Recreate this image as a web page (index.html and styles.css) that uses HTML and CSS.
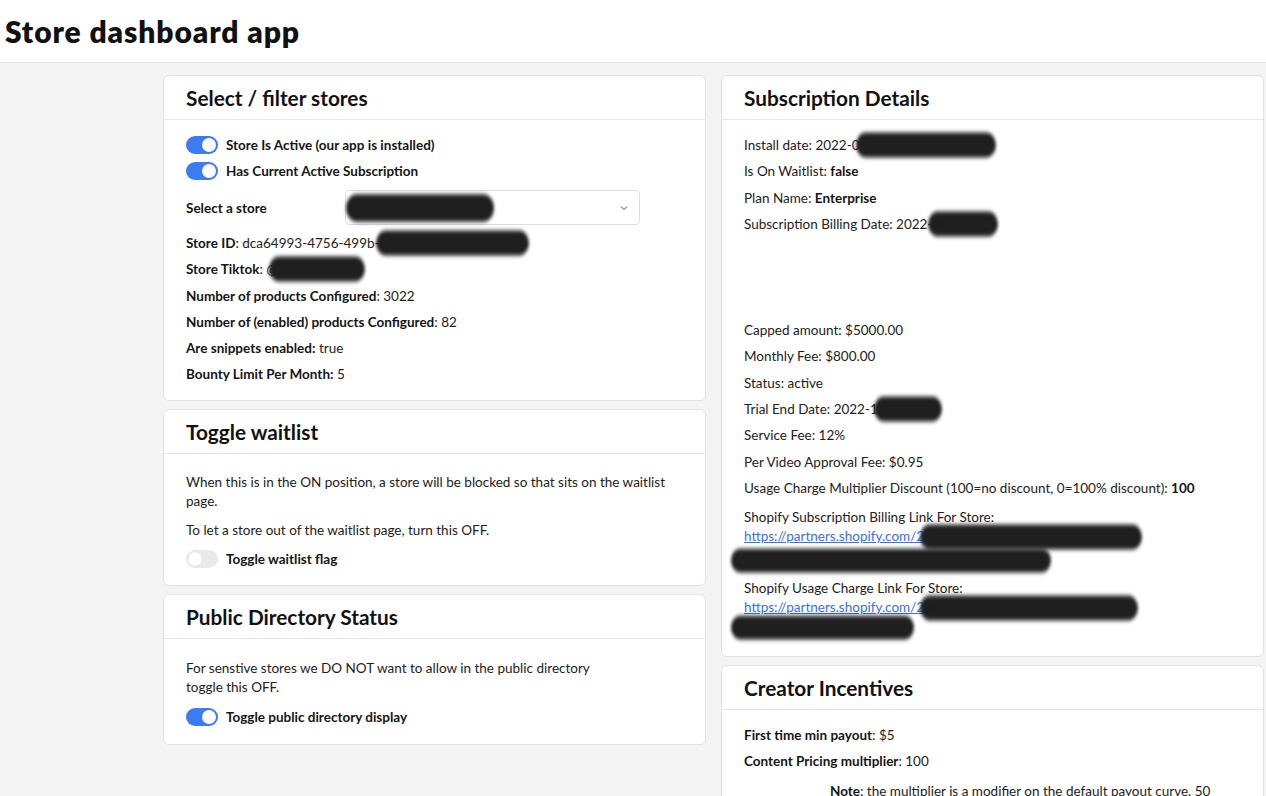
FILE: index.html
```html
<!DOCTYPE html>
<html lang="en">
<head>
<meta charset="utf-8">
<title>Store dashboard app</title>
<link rel="stylesheet" href="styles.css">
</head>
<body>
<header class="topbar"><h1>Store dashboard app</h1></header>
<main class="layout">
  <div class="column">
    <section class="card">
      <div class="card-head"><h2>Select / filter stores</h2></div>
      <div class="card-body">
        <label class="switch-row"><span class="switch on"></span><b>Store Is Active (our app is installed)</b></label>
        <label class="switch-row"><span class="switch on"></span><b>Has Current Active Subscription</b></label>
        <div class="select-row">
          <b class="select-label">Select a store</b>
          <div class="select">
            <span class="blob blob-select"></span>
            <svg class="chevron" width="10" height="6" viewBox="0 0 10 6"><path d="M2 1.5 5 4.5 8 1.5" fill="none" stroke="#9a9a9a" stroke-width="1.3"/></svg>
          </div>
        </div>
        <p class="line"><b>Store ID</b>: dca64993-4756-499b-<span class="blob blob-over" style="width:153px"></span></p>
        <p class="line"><b>Store Tiktok</b>: @<span class="blob blob-over2" style="width:96px"></span></p>
        <p class="line"><b>Number of products Configured</b>: 3022</p>
        <p class="line"><b>Number of (enabled) products Configured</b>: 82</p>
        <p class="line"><b>Are snippets enabled:</b> true</p>
        <p class="line"><b>Bounty Limit Per Month:</b> 5</p>
      </div>
    </section>
    <section class="card">
      <div class="card-head"><h2>Toggle waitlist</h2></div>
      <div class="card-body">
        <p class="para">When this is in the ON position, a store will be blocked so that sits on the waitlist page.</p>
        <p class="para">To let a store out of the waitlist page, turn this OFF.</p>
        <label class="switch-row"><span class="switch"></span><b>Toggle waitlist flag</b></label>
      </div>
    </section>
    <section class="card">
      <div class="card-head"><h2>Public Directory Status</h2></div>
      <div class="card-body tall">
        <p class="para narrow">For senstive stores we DO NOT want to allow in the public directory toggle this OFF.</p>
        <label class="switch-row"><span class="switch on"></span><b>Toggle public directory display</b></label>
      </div>
    </section>
  </div>
  <div class="column">
    <section class="card">
      <div class="card-head"><h2>Subscription Details</h2></div>
      <div class="card-body">
        <p class="line">Install date: 2022-0<span class="blob blob-over" style="width:140px"></span></p>
        <p class="line">Is On Waitlist: <b>false</b></p>
        <p class="line">Plan Name: <b>Enterprise</b></p>
        <p class="line">Subscription Billing Date: 2022-<span class="blob blob-over" style="width:70px"></span></p>
        <div class="spacer"></div>
        <p class="line">Capped amount: $5000.00</p>
        <p class="line">Monthly Fee: $800.00</p>
        <p class="line">Status: active</p>
        <p class="line">Trial End Date: 2022-1<span class="blob blob-over" style="width:68px"></span></p>
        <p class="line">Service Fee: 12%</p>
        <p class="line">Per Video Approval Fee: $0.95</p>
        <p class="line">Usage Charge Multiplier Discount (100=no discount, 0=100% discount): <b>100</b></p>
        <p class="linkblock">Shopify Subscription Billing Link For Store:<br><a href="#">https://partners.shopify.com/2</a><span class="blob blob-over" style="width:222px"></span><span class="blob blob-line low" style="width:320px"></span></p>
        <p class="linkblock">Shopify Usage Charge Link For Store:<br><a href="#">https://partners.shopify.com/2</a><span class="blob blob-over" style="width:218px"></span><span class="blob blob-line" style="width:183px"></span></p>
      </div>
    </section>
    <section class="card">
      <div class="card-head"><h2>Creator Incentives</h2></div>
      <div class="card-body">
        <p class="line"><b>First time min payout</b>: $5</p>
        <p class="line"><b>Content Pricing multiplier</b>: 100</p>
        <p class="note"><b>Note</b>: the multiplier is a modifier on the default payout curve. 50 means half the default payout, 200 means double the default payout.</p>
      </div>
    </section>
  </div>
</main>
</body>
</html>
```
FILE: styles.css
```css
* { box-sizing: border-box; }
html, body { margin: 0; padding: 0; }
body {
  font-family: "Lato", "Open Sans", sans-serif;
  font-size: 13.5px;
  color: #222;
  background: #f4f4f4;
  min-height: 796px;
}
b { font-weight: 700; color: #151515; }

.topbar {
  background: #fff;
  height: 63px;
  border-bottom: 1px solid #e2e2e2;
  padding: 0 5px;
}
.topbar h1 {
  margin: 0;
  font-size: 30px;
  line-height: 62px;
  font-weight: 800;
  letter-spacing: 0.9px;
  color: #111;
}

.layout {
  display: grid;
  grid-template-columns: 543px 543px;
  column-gap: 15px;
  padding: 12px 0 0 163px;
  align-items: start;
}
.column { display: flex; flex-direction: column; gap: 8px; }

.card {
  background: #fff;
  border: 1px solid #e2e2e2;
  border-radius: 6px;
}
.card-head {
  height: 44px;
  border-bottom: 1px solid #e6e6e6;
  padding: 0 22px;
}
.card-head h2 {
  margin: 0;
  font-size: 20.8px;
  line-height: 43px;
  font-weight: 700;
  color: #111;
}
.card-body { padding: 15px 22px 16px; }
.card-body.tall { padding-bottom: 17px; }

.switch-row {
  display: flex;
  align-items: center;
  gap: 8px;
  height: 20px;
  margin-bottom: 6px;
}
.switch {
  position: relative;
  width: 32px;
  height: 18px;
  border-radius: 9px;
  background: #e9e9e9;
  flex: none;
}
.switch::after {
  content: "";
  position: absolute;
  top: 2px;
  left: 2px;
  width: 14px;
  height: 14px;
  border-radius: 50%;
  background: #fff;
  box-shadow: 0 0 1px rgba(0,0,0,.15);
}
.switch.on { background: #3d7bf3; }
.switch.on::after { left: 16px; }
.card-body > .switch-row:last-child { margin-bottom: 0; }
.para + .switch-row { margin-top: -1px; }
.narrow + .switch-row { margin-top: 1px; }

.select-row {
  display: flex;
  align-items: center;
  margin: 9px 0 8px;
}
.select-label { width: 159px; }
.select {
  width: 295px;
  height: 35px;
  border: 1px solid #dedede;
  border-radius: 4px;
  display: flex;
  align-items: center;
  justify-content: space-between;
  padding: 0 10px 0 0;
}
.chevron { display: block; }

.line {
  margin: 0 0 6.3px;
  line-height: 20px;
}
.card-body > .line:last-child { margin-bottom: 0; }

.para {
  margin: 0 0 10px;
  line-height: 19px;
}
.para:first-child { margin-top: 4px; }
.para.narrow { max-width: 410px; margin-top: 5px; }

.spacer { height: 80px; }

.linkblock {
  margin: 10px 0 13px;
  line-height: 19px;
}
.linkblock:last-child { margin-bottom: 3px; }
.linkblock a { color: #3b6fe6; text-decoration: underline; }

.note { margin: 10px 0 0 86px; line-height: 20px; }

.blob {
  display: inline-block;
  height: 20px;
  vertical-align: top;
  background: #1f1f1f;
  border-radius: 11px;
  transform: scaleY(1.25);
  filter: blur(1.5px);
}
.blob-over { margin-left: -4px; }
.blob-over2 { margin-left: -9px; }
.blob-line {
  display: block;
  height: 19px;
  margin: 0 0 0 -13px;
}
.blob-line.low { transform: translateY(4px) scaleY(1.25); }
.blob-select {
  width: 148px;
  height: 22px;
}
```
